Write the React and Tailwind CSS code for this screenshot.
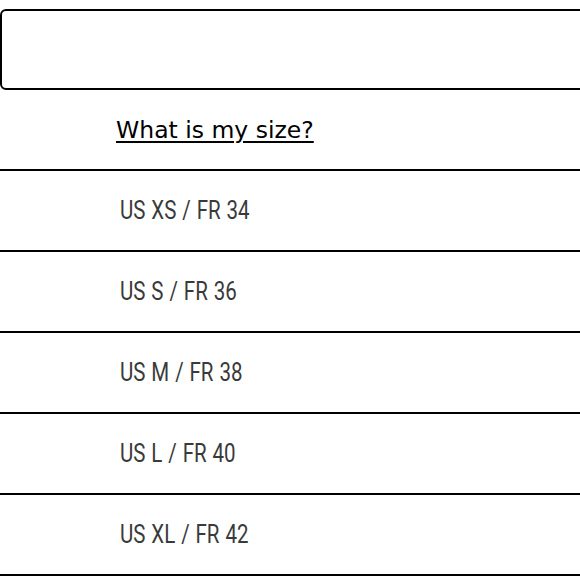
import React from 'react'

const sizes = ['US XS / FR 34', 'US S / FR 36', 'US M / FR 38', 'US L / FR 40', 'US XL / FR 42']

const App = () => {
  return (
    <div className="w-[580px] h-[580px] overflow-hidden bg-white pt-[9px]">
      {/* search box, runs off the right edge */}
      <div className="w-[600px] h-[81px] border-2 border-black rounded-l-md"></div>
      <div className="h-[81px] border-b-2 border-black flex items-center pl-[116px] pt-[3px]">
        <a href="#" className="text-[23.5px] text-black underline underline-offset-[3px]" style={{ fontFamily: '"DejaVu Sans", sans-serif' }}>
          What is my size?
        </a>
      </div>
      {sizes.map((s) => (
        <div key={s} className="h-[81px] border-b-2 border-black flex items-center pl-[120px]">
          <span className="inline-block origin-left scale-x-[0.82] text-[25px] text-[#3a3a3a] [word-spacing:1px]" style={{ fontFamily: 'Roboto, sans-serif' }}>
            {s}
          </span>
        </div>
      ))}
    </div>
  )
}

export default App
